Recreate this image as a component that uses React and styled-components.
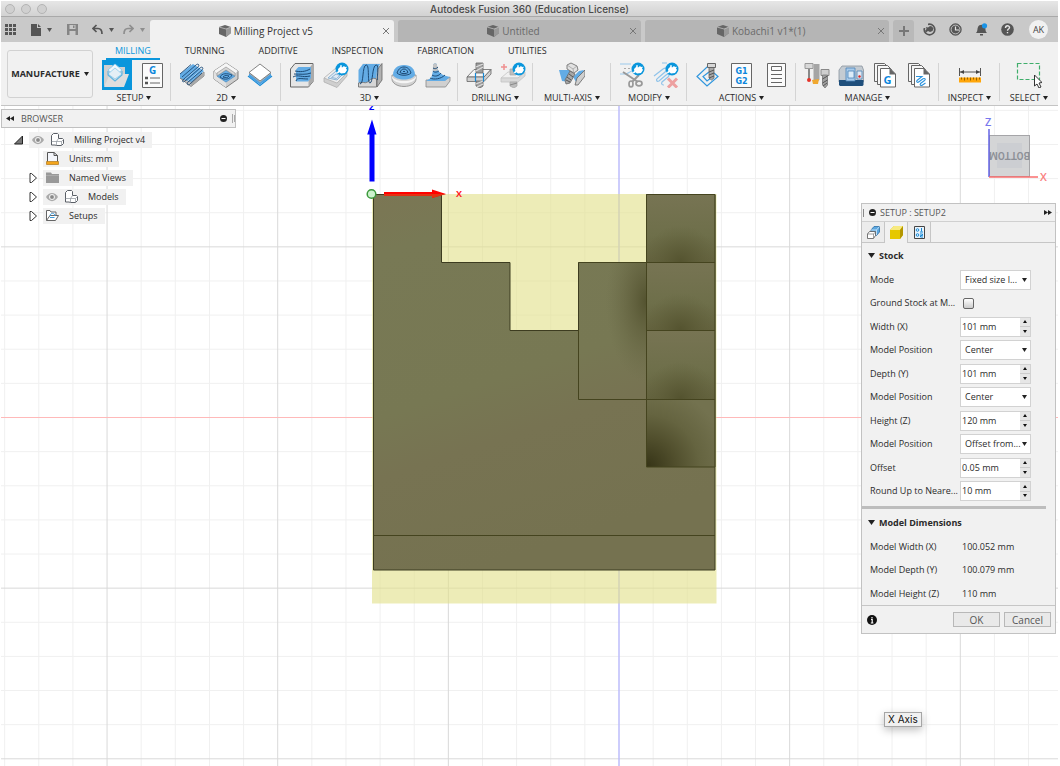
import { useState } from "react";
import styled, { createGlobalStyle, css } from "styled-components";

const GlobalStyle = createGlobalStyle`
  * { box-sizing: border-box; }
  html, body { margin: 0; background: #fff; }
  body, button, input, select {
    font-family: "Open Sans", "Noto Sans", sans-serif;
    font-size: 9px;
    line-height: 12px;
    color: #2b2b2b;
  }
  button { border: 0; padding: 0; margin: 0; background: none; }
  svg { display: block; flex: none; }
`;

const StylePage = styled.div`
  display: flex;
  flex-direction: column;
  min-height: 100vh;
  padding: 1px 2px 0 1px;
`;

/* ---------- window chrome ---------- */

const StyleTitleBar = styled.header`
  display: grid;
  grid-template-columns: 1fr auto 1fr;
  align-items: center;
  height: 16px;
  padding: 0 4px;
  background: linear-gradient(#e6e6e6, #d2d2d2);
  border-bottom: 1px solid #a9a9a9;
  h1 {
    margin: 0;
    font: 500 10px/14px Inter, Roboto, sans-serif;
    color: #4a4a4a;
  }
`;

const StyleLights = styled.div`
  display: flex;
  gap: 6px;
  i {
    width: 10px;
    height: 10px;
    border: 1px solid #b4b4b4;
    border-radius: 50%;
    background: #d0d0d0;
  }
`;

const StyleTopBar = styled.div`
  display: flex;
  height: 25px;
  background: #c9c9c9;
`;

const StyleQuickBar = styled.div`
  display: flex;
  align-items: center;
  width: 149px;
  padding-left: 4px;
  flex: none;
  button { display: flex; align-items: center; gap: 6px; }
`;

const StyleQuickButton = styled.button`
  margin-right: ${(p) => p.$after || 0}px;
  opacity: ${(p) => (p.$dim ? 0.5 : 1)};
`;

const StyleDocTabs = styled.div`
  display: flex;
  flex: 1;
  gap: 4px;
  min-width: 0;
`;

const StyleDocTab = styled.div`
  display: flex;
  flex: 1;
  align-items: center;
  min-width: 0;
  padding-right: 4px;
  margin-top: 3px;
  border-radius: 3px 3px 0 0;
  background: ${(p) => (p.$active ? "#f1f1f1" : "#b5b5b5")};
  color: ${(p) => (p.$active ? "#333" : "#6a6a6a")};
  .name {
    display: flex;
    flex: 1;
    align-items: center;
    justify-content: center;
    gap: 3px;
    color: inherit;
    font-size: 10px;
    white-space: nowrap;
  }
`;

const StyleAddTab = styled.button`
  display: grid;
  place-items: center;
  width: 21px;
  margin: 3px 0 0 4px;
  border-radius: 3px 3px 0 0;
  background: #b9b9b9;
`;

const StyleAccount = styled.div`
  display: flex;
  align-items: center;
  gap: 13px;
  padding: 0 10px 0 9px;
  flex: none;
`;

const StyleAvatar = styled.button`
  width: 19px;
  height: 19px;
  margin-left: 2px;
  border-radius: 50%;
  background: #f1f1f1;
  color: #444;
`;

/* ---------- ribbon ---------- */

const StyleRibbon = styled.nav`
  display: flex;
  height: 64px;
  background: #f1f1f1;
  border-bottom: 1px solid #c4c4c4;
`;

const StyleWorkspace = styled.button`
  display: flex;
  align-items: center;
  justify-content: center;
  gap: 4px;
  flex: none;
  width: 86px;
  height: 48px;
  margin: 8px 4px 0 6px;
  border: 1px solid #d2d2d2;
  border-radius: 3px;
  font-weight: 700;
`;

const StyleRibbonMain = styled.div`
  flex: 1;
  min-width: 0;
`;

const StyleRibbonTabs = styled.div`
  display: flex;
  gap: 16px;
  padding-left: 9px;
`;

const StyleRibbonTab = styled.button`
  height: 18px;
  padding: 2px 9px 0;
  border-bottom: 2px solid ${(p) => (p.$active ? "#0a96dc" : "transparent")};
  color: ${(p) => (p.$active ? "#0a96dc" : "#2b2b2b")};
`;

const StyleGroups = styled.div`
  display: flex;
  height: 45px;
`;

const StyleGroup = styled.section`
  display: flex;
  flex-direction: column;
  align-items: center;
  flex: ${(p) => p.$grow} 1 0;
  background: linear-gradient(#d4d4d4, #d4d4d4) right 3px / 1px 38px no-repeat;
  &:last-child { background: none; }
  .tools {
    display: flex;
    align-items: center;
    justify-content: center;
    height: 30px;
    gap: 8px;
  }
  .label {
    display: flex;
    align-items: center;
    gap: 3px;
    height: 15px;
    white-space: nowrap;
  }
`;

const StyleTool = styled.button`
  ${(p) =>
    p.$active &&
    css`
      padding: 2px;
      background: #0a96dc;
    `}
`;

/* ---------- viewport ---------- */

const StyleViewport = styled.main`
  position: relative;
  display: flex;
  justify-content: space-between;
  align-items: flex-start;
  flex: 1;
  overflow: hidden;
  background: #fff;
`;

const StyleScene = styled.svg`
  position: absolute;
  inset: 0;
  width: 100%;
  height: 100%;
`;

const StyleBrowser = styled.aside`
  position: relative;
  width: 235px;
  padding-top: 3px;
  header {
    display: flex;
    align-items: center;
    height: 19px;
    padding: 0 0 0 4px;
    background: #f1f1f1;
    border: 1px solid #c0c0c0;
    color: #555;
  }
  header span { flex: 1; padding-left: 7px; }
  ul { margin: 2px 0 0; padding: 0; list-style: none; }
`;

const StyleNode = styled.li`
  display: flex;
  align-items: center;
  gap: 5px;
  height: 19px;
  padding-left: ${(p) => (p.$root ? 12 : 26)}px;
  .chip {
    display: flex;
    align-items: center;
    gap: 7px;
    height: 16px;
    padding: 0 7px 0 3px;
    background: #f1f1f1;
  }
  .chip span { padding-left: 3px; white-space: nowrap; }
`;

const StyleRightSide = styled.div`
  position: relative;
  display: flex;
  flex-direction: column;
  align-items: flex-end;
  padding-right: 2px;
`;

const StyleCube = styled.svg`
  margin: 8px 6px 15px 0;
`;

const StylePalette = styled.form`
  width: 195px;
  background: #f1f1f1;
  border: 1px solid #c2c2c2;
`;

const StylePaletteHead = styled.header`
  display: flex;
  align-items: center;
  height: 18px;
  padding: 0 3px 0 1px;
  gap: 4px;
  color: #555;
  border-bottom: 1px solid #d0d0d0;
  span { flex: 1; }
`;

const StylePaletteTabs = styled.div`
  display: flex;
  height: 21px;
  border-bottom: 1px solid #c6c6c6;
`;

const StylePaletteTab = styled.button`
  display: grid;
  place-items: center;
  width: 23px;
  height: ${(p) => (p.$active ? 21 : 20)}px;
  border-right: 1px solid #c6c6c6;
  background: ${(p) => (p.$active ? "#f1f1f1" : "#ececec")};
`;

const StyleSectionTitle = styled.h2`
  display: flex;
  align-items: center;
  gap: 4px;
  height: 25px;
  margin: 0;
  padding-left: 6px;
  font-size: 9px;
  font-weight: 700;
`;

const StyleFields = styled.div`
  display: grid;
  grid-template-columns: 90px 71px;
  grid-auto-rows: 23px 24px;
  align-items: center;
  margin: 0;
  padding-left: 8px;
  label, dt, dd { margin: 0; white-space: nowrap; }
  dd { padding-left: 2px; }
`;

const StyleSelect = styled.div`
  position: relative;
  select {
    appearance: none;
    display: block;
    width: 71px;
    height: 20px;
    padding: 0 0 0 4px;
    border: 1px solid #d2d2d2;
    border-radius: 0;
    background: #fff;
  }
  svg { position: absolute; right: 4px; top: 8px; pointer-events: none; }
`;

const StyleSpinner = styled.div`
  display: flex;
  width: 71px;
  height: 20px;
  border: 1px solid #d2d2d2;
  input {
    flex: 1;
    min-width: 0;
    padding: 0 0 0 1px;
    border: 0;
    background: #fff;
  }
  div {
    display: flex;
    flex-direction: column;
    width: 10px;
    gap: 1px;
    background: #ccc;
  }
  button {
    display: grid;
    place-items: center;
    flex: 1;
    background: #e6e6e6;
  }
`;

const StyleCheck = styled.input`
  appearance: none;
  width: 11px;
  height: 11px;
  margin: 0 0 0 3px;
  border: 1px solid #666;
  border-radius: 2px;
  background: linear-gradient(#fff, #ccc);
`;

const StyleDivider = styled.hr`
  height: 3px;
  margin: 3px 9px 1px 0;
  border: 0;
  background: #bdbdbd;
`;

const StylePaletteFoot = styled.footer`
  display: flex;
  align-items: center;
  justify-content: flex-end;
  gap: 4px;
  height: 28px;
  padding: 0 4px 0 5px;
  border-top: 1px solid #c6c6c6;
  svg { margin-right: auto; }
  button {
    width: 47px;
    height: 15px;
    border: 1px solid #b8b8b8;
    background: #e9e9e9;
    font-size: 10px;
    color: #555;
  }
`;

const StyleHint = styled.div`
  position: absolute;
  left: 883px;
  top: 606px;
  padding: 0 3px;
  border: 1px solid #a6a6a6;
  background: #f0f0f0;
  box-shadow: 0 3px 8px rgba(0, 0, 0, 0.25);
  font: 10px/13px Inter, Roboto, sans-serif;
  color: #111;
`;

/* ---------- icons ---------- */

const Svg = ({ w = 26, h = w, children }) => (
  <svg width={w} height={h} viewBox={`0 0 ${w} ${h}`} fill="none" aria-hidden="true">
    {children}
  </svg>
);

const Caret = ({ color = "#222" }) => (
  <Svg w={5} h={4}>
    <path d="M0 0h5L2.500 4z" fill={color} />
  </Svg>
);

const BLUE = "#63ace5";
const LINE = "#666";
const DARK = "#1d4a75";

// round blue badge that marks preview commands
const Badge = () => (
  <g>
    <circle cx="19" cy="7" r="6.500" fill="#0a96dc" />
    <path d="M15 7l3-3 1 1.500L21 4l1.500 1.500L24 8l-2 3-4 .5-1.500-1.300-1.700 1.300-1-1.200L15.300 9z" fill="#fff" />
    <path d="M18 5V3M22 6l1.500-1" stroke="#fff" strokeWidth="1.200" />
  </g>
);

const Block = ({ children }) => (
  <g>
    <path d="M1.500 7L6 1.500h18v18L19.500 25h-18z" fill="#e6e6e6" stroke={LINE} />
    <path d="M19.500 7L24 1.500v18L19.500 25z" fill="#ababab" />
    {children}
  </g>
);

const Pages = ({ children }) => (
  <g>
    <path d="M2.500 1.500h10l4 4v14h-14z" fill="#f6f6f6" stroke={LINE} />
    <path d="M5.500 3.500h10l4 4v15h-14z" fill="#f6f6f6" stroke={LINE} />
    <path d="M8.500 6.500H18l5.500 5.500v13h-15z" fill="#fff" stroke={LINE} />
    <path d="M17.500 6v6.500H24z" fill={LINE} />
    {children}
  </g>
);

const icons = {
  setup: (
    <g>
      <path d="M0 24V3h8l2 2h11v8z" fill="#d0d0d0" />
      <path d="M11 2l7 6-7 6-7-6z" fill="#f2f8fc" stroke="#8fcdee" />
      <path d="M0 25l6-13h19l-5 13z" fill="#dedede" />
      <path d="M11 6l7 6-7 5-7-5z" fill="#e4eff6" stroke="#8fcdee" strokeWidth=".8" />
      <path d="M4 9v4l7 6 7-6V9" stroke="#5cb4e2" strokeWidth="1.100" />
    </g>
  ),
  gcode: (
    <g>
      <path d="M2.500 1.500h20v24h-20z" fill="#fbfbfb" stroke={LINE} />
      <text x="12.500" y="11.500" textAnchor="middle" fontSize="10" fontWeight="700" fill="#0a86dc">G</text>
      <path d="M5 16h3M5 21h3" stroke="#555" strokeWidth="2.500" />
      <path d="M10 16h10M10 21h10" stroke="#666" />
    </g>
  ),
  face: (
    <g>
      <path d="M1 16l11 8.500L25 14v-4L12 20z" fill="#c4c4c4" stroke={LINE} strokeWidth=".7" />
      <path d="M12 20L25 10v4L12 24.500z" fill="#a9a9a9" />
      <path d="M1 12L14 2l11 7-13 11L1 16z" fill={BLUE} />
      <path d="M6 17L20 5M9 19L23 7" stroke="#a5d1f3" />
      <path d="M3 15L17 3c2-2 4 0 2 2L5 17c-3 2-1 4 1 2L21 6c2-2 4 0 2 2L9 20c-2 2 0 4 2 2l12-11M1 12L12 2.500" stroke={DARK} strokeWidth=".9" />
    </g>
  ),
  pocket: (
    <g>
      <path d="M13 1l12 8v8l-12 8.500L1 17V9z" fill="#cdcdcd" stroke={LINE} strokeWidth=".8" />
      <path d="M13 1l12 8-12 9L1 9z" fill="#f6f6f6" />
      <path d="M1 9v8l12 8.500V21L5 15.500 3 12z" fill="#e2e2e2" />
      <path d="M13 8l9 6-9 6-9-6z" fill={BLUE} stroke="#4f92c9" strokeWidth=".8" />
      <path d="M13 8l9 6v-3l-9-6-9 6v3z" fill="#d6d6d6" stroke="#8a8a8a" strokeWidth=".6" />
      <path d="M7 15c2-4 7-4 12-2-2 4-7 6-12 2zM10 15c2-2 4-2 6-1-1 2-4 2-6 1z" stroke={DARK} strokeWidth=".9" />
    </g>
  ),
  contour: (
    <g>
      <path d="M1 14l12 9.500L25 14" stroke="#1689d6" strokeWidth="1.200" />
      <path d="M2 11l11 8.500L24 11v4l-11 7.500L2 15z" fill="#4ba0e0" />
      <path d="M2 10l11 9 11-9v1.500L13 20.500 2 11.500z" fill="#b4b4b4" />
      <path d="M13 2l11 8.500-11 8.500L2 10.500z" fill="#fff" stroke={LINE} strokeWidth=".8" />
    </g>
  ),
  adaptive: (
    <Block>
      <path d="M7 7.500L9.500 5H22v11l-3 3.500H7z" fill={BLUE} />
      <path d="M6 9c5 1 10 1 15-2M5 12c6 0 12 1 17-1M4 15c5-3 9 1 17-1M7 19c1-4 6-2 12-2" stroke={DARK} />
    </Block>
  ),
  pocket3d: (
    <g>
      <path d="M1 16v4l13 5.500L24 14v-4" fill="#cfcfcf" stroke="#b0b0b0" strokeWidth=".8" />
      <path d="M1 16L13 6l11 5-10 10z" fill="#ededed" stroke="#b0b0b0" strokeWidth=".8" />
      <path d="M5 16l8-7 7 3-6 6zM8.500 15.500L13 12l4 1.500-3.500 3z" fill="#dfeaf4" stroke="#8fb4d3" />
      <Badge />
    </g>
  ),
  parallel: (
    <g>
      <path d="M1.500 8l4.500-6.500h19l-4.500 6.500z" fill="#dcdcdc" />
      <path d="M20 8l5-6.500V18l-5 7z" fill="#b2b2b2" stroke={LINE} strokeWidth=".8" />
      <path d="M1.500 8L6 2h17l-3 6-1 9c-4-2-6 1-8 3-3 2-6-1-9.500 1z" fill={BLUE} />
      <path d="M1.500 21c4-2 6 1 9-1s4-5 9-3v8h-18z" fill="#d6d6d6" stroke={LINE} strokeWidth=".8" />
      <path d="M3 22C7 22 5 4 9 3s1 18 4 18 2-17 6-18 0 15 2 15" stroke={DARK} />
    </g>
  ),
  scallop: (
    <g>
      <path d="M1 13v4c0 4 5 7.500 12 7.500S25 21 25 17v-4z" fill="#d2d2d2" stroke="#888" strokeWidth=".8" />
      <path d="M1 13c0 8 24 8 24 0v3c-3 7-21 7-24 0z" fill="#f4f4f4" />
      <path d="M2 13C2 7 6 3 13 3s11 4 11 10c-3 6-19 6-22 0z" fill={BLUE} />
      <path d="M6 11c1-3 3-6 7-6s6 3 7 6c-3 3-11 3-14 0zM9 10.500C10 8 11 7 13 7s3 1 4 3.500c-2 1.500-6 1.500-8 0zM12 9.500h2" stroke={DARK} />
    </g>
  ),
  ramp: (
    <g>
      <path d="M1 18h19l5-3v4l-4.500 6H1z" fill="#d0d0d0" stroke="#888" strokeWidth=".8" />
      <path d="M8 3c1-2.500 4-2.500 4 .5 0 7 5 10 13 11.500L20 19H1l5-3c2-4 2-9 2-13z" fill={BLUE} />
      <path d="M8 3c1-2.500 4-2.500 4 .5l1 5-5 1z" fill="#c4c4c4" />
      <path d="M8 6c2 1 3 1 5-1M8 9c2 2 4 1 6 0M7 13c3 2 7 1 9-2M5 16c4 2 11 1 15-3" stroke={DARK} />
    </g>
  ),
  drill: (
    <g>
      <path d="M1 15l7-7.500h17L18 15z" fill="#f6f6f6" stroke={LINE} strokeWidth=".8" />
      <path d="M1 15h17l7-7.500V12l-7 7.500H1z" fill="#cfcfcf" stroke={LINE} strokeWidth=".8" />
      <path d="M10 1h7v10h-7zM10 19h7v5l-3 2-4-2z" fill="#9c9c9c" stroke={LINE} strokeWidth=".8" />
      <path d="M10 5l7-3M10 9l7-4M10 22l7-3M11 25l6-3" stroke="#dedede" strokeWidth="1.200" />
      <path d="M9.500 11v8.500M17.500 11v8.500" stroke="#1689d6" strokeWidth="1.200" />
    </g>
  ),
  drillAdd: (
    <g>
      <path d="M4 2v6M1 5h6" stroke="#ee8f8f" strokeWidth="1.500" />
      <path d="M1 16l7-6h17l-7 6z" fill="#f0f0f0" stroke="#c4c4c4" strokeWidth=".8" />
      <path d="M1 16h17l7-6v4l-7 6H1z" fill="#dadada" stroke="#c4c4c4" strokeWidth=".8" />
      <path d="M10 7h6v6h-6zM10 20h7v4l-3 2-4-2z" fill="#bdbdbd" stroke="#aaa" strokeWidth=".8" />
      <path d="M10 23l7-2" stroke="#888" />
      <Badge />
    </g>
  ),
  multi: (
    <g>
      <path d="M0 8h10l4 4-4 8-7-1z" fill={BLUE} />
      <path d="M14 15l6-6 5-1-6 15z" fill={BLUE} />
      <path d="M18 16l8-8v6l-7 9h-3z" fill="#cfcfcf" stroke={LINE} strokeWidth=".8" />
      <path d="M11 9l5 3-5 9-4 1-1-4z" fill="#a8a8a8" stroke={LINE} strokeWidth=".8" />
      <path d="M10 12l4 3M8 15l4 3M7 18l4 2" stroke="#555" />
      <path d="M8 3l4-2 6 3 1 4-4 3-7-4z" fill="#e2e2e2" stroke={LINE} strokeWidth=".8" />
      <path d="M8 3l6 4 4-3M14 7l1 4" stroke="#999" strokeWidth=".7" />
    </g>
  ),
  trim: (
    <g>
      <path d="M1 2h11M1 12h5c4 0 4-3 8-3" stroke="#9ccaec" strokeWidth="1.200" />
      <path d="M5 6.500h6" stroke="#aaa" strokeDasharray="2 2" />
      <path d="M4 10l15 10M20 13l-7 7" stroke="#999" strokeWidth="2" />
      <ellipse cx="12" cy="22" rx="2" ry="3" stroke="#999" strokeWidth="1.700" />
      <ellipse cx="20" cy="21.500" rx="3" ry="2.300" stroke="#999" strokeWidth="1.700" />
      <Badge />
    </g>
  ),
  untrim: (
    <g>
      <path d="M9 1h5M1 14l9-7c3-2 5 0 2 3l-7 6c-3 2-1 4 1 3l7-6c3-2 4 0 2 2l-6 5c-1 2 0 3 2 3" stroke="#8fc3ea" strokeWidth="1.200" />
      <path d="M15 16.500l9 9M24 16.500l-9 9" stroke="#eda0a0" strokeWidth="3" />
      <Badge />
    </g>
  ),
  simulate: (
    <g>
      <path d="M14 5h-2L2 14.500 12 24l11-9.500L19 11M14 10l-6 4.500 4 4.500 6-4.500" stroke="#2f96de" strokeWidth="1.200" />
      <path d="M14 5h5v11l-2.500 2L14 16z" fill="#a8a8a8" stroke={LINE} strokeWidth=".8" />
      <path d="M14 10l5-2M14 13l5-2M14 16l5-2" stroke="#555" />
      <path d="M12.500 1.500h8v4h-8z" fill="#d8d8d8" stroke={LINE} />
    </g>
  ),
  g1g2: (
    <g fontFamily="DejaVu Sans, sans-serif" fontSize="8" fontWeight="700" fill="#0a86dc" textAnchor="middle">
      <path d="M2.500 1.500h20v24h-20z" fill="#fbfbfb" stroke={LINE} />
      <text x="12.500" y="12">G1</text>
      <text x="12.500" y="22">G2</text>
    </g>
  ),
  sheet: (
    <g>
      <path d="M4.500 1.500h18v23h-18z" fill="#fbfbfb" stroke={LINE} />
      <path d="M8.500 4.500h10v4h-10z" stroke={LINE} />
      <path d="M8 12.500h11M8 16.500h11M8 20.500h11" stroke={LINE} />
    </g>
  ),
  library: (
    <g>
      <path d="M1 1.500h8v5H1z" fill="#d8d8d8" stroke="#999" />
      <path d="M5 7v10" stroke="#666" strokeWidth="1.500" />
      <circle cx="5" cy="18" r="2" fill="#e5332a" />
      <path d="M9.500 2h6v16l-3 2h-3z" fill="#a5a5a5" />
      <path d="M8 18l7-1-1 5H9z" fill="#f0a830" />
      <path d="M17 7.500h8v6h-8z" fill="#cfcfcf" stroke="#888" />
      <path d="M18.500 13h5v10l-2.500 3-2.500-3z" fill="#a2a2a2" stroke="#777" strokeWidth=".8" />
      <path d="M18.500 17l5-3M18.500 21l5-3M19 24l4-3" stroke="#555" />
    </g>
  ),
  machine: (
    <g>
      <path d="M1 20V8l3-4h20l1.500 4v12z" fill="#c4cbd2" stroke="#8a949e" strokeWidth=".8" />
      <path d="M1 18h24.500v5l-1 1H2l-1-1z" fill="#1f4f7c" />
      <path d="M8 6h9v13H8z" fill="#a8cbec" stroke="#4c83b6" strokeWidth=".8" />
      <path d="M10 9h6v7h-6z" fill="#dcebf8" stroke="#4c83b6" strokeWidth=".8" />
      <path d="M19 9h5v8h-5z" fill="#dfe8f2" stroke="#4c83b6" strokeWidth=".8" />
      <circle cx="21.500" cy="14.500" r="1.200" fill="#d22" />
    </g>
  ),
  post: (
    <Pages>
      <text x="15.500" y="22" textAnchor="middle" fontSize="11" fontWeight="700" fill="#0a86dc">G</text>
    </Pages>
  ),
  template: (
    <Pages>
      <path d="M10 14.500h6l-5 4c-1 1.500.5 2.500 2 1.300l4-3c2-1 3 .5 1.500 1.700l-4 3c-1 1.500.5 2.500 2 1.500l3-2" stroke="#2a92dd" strokeWidth="1.100" />
    </Pages>
  ),
  measure: (
    <g>
      <path d="M2.500 6v8M23.500 6v8M3 10h20" stroke="#555" />
      <path d="M3 10l4-2v4zM23 10l-4-2v4z" fill="#444" />
      <path d="M2 15.500h22v5H2z" fill="#ffa60a" />
      <path d="M4.500 15.500v2M7.500 15.500v3M10.500 15.500v2M13.500 15.500v3M16.500 15.500v2M19.500 15.500v3M22.500 15.500v2" stroke="#8a5a00" strokeWidth=".9" />
    </g>
  ),
  select: (
    <g>
      <path d="M1.500 1.500h22v16h-22z" stroke="#3fae6b" strokeWidth="1.200" strokeDasharray="4 2" />
      <path d="M18.500 13v11l2.500-2 2 4 2-1-2-4 3-.5z" fill="#fff" stroke="#333" />
    </g>
  ),
};

const Cube = () => (
  <Svg w={12}>
    <path d="M0 2l6-2 6 2v6l-5 4-7-3z" fill="#666" />
    <path d="M7 4l5-2v6l-5 4z" fill="#999" />
    <path d="M0 2l7 2 5-2" stroke="#ccc" strokeWidth=".7" />
  </Svg>
);

const Eye = () => (
  <Svg w={12} h={10}>
    <path d="M0 5c3-5.500 9-5.500 12 0-3 5.500-9 5.500-12 0z" fill="#aaa" />
    <circle cx="6" cy="5" r="2.600" stroke="#eee" />
    <circle cx="6" cy="5" r="1.500" fill="#888" />
  </Svg>
);

const nodeIcons = {
  component: (
    <Svg w={13}>
      <path d="M.5 2.500l2-2h4l1 1v4h4l1 1v4l-2 2H5.500l-1.500-.5H.5z" fill="#fff" stroke="#5a5f66" />
      <path d="M5.500 12.500v-4l2-3M5.500 8.500h-5M5.500 8.500h5l2-2M10.500 8.500v4" stroke="#8a9098" strokeWidth=".7" />
    </Svg>
  ),
  units: (
    <Svg w={13}>
      <path d="M1.500 9.500v-9H8l3.500 3v6" fill="#f4f6fb" stroke="#555" />
      <path d="M8 .5v3h3.500" stroke="#555" />
      <path d="M.5 9.500h12v3H.5z" fill="#f3a51c" stroke="#a86c08" strokeWidth=".6" />
    </Svg>
  ),
  folder: (
    <Svg w={13}>
      <path d="M0 1.500h5L6 3h7v9H0z" fill="#999" />
      <path d="M0 4.500h13" stroke="#b5b5b5" strokeWidth=".7" />
    </Svg>
  ),
  setups: (
    <Svg w={13}>
      <path d="M.5 11.500v-10H4l1 1.500h5V6" fill="#fff" stroke="#666" />
      <path d="M.5 11.500L4 6.500h8.500l-3 5z" fill="#fff" stroke="#666" />
      <path d="M4 7c0-3.500 5-3.500 5 0M4 8.500h4.500" stroke="#3d9bdc" />
    </Svg>
  ),
};

/* ---------- data ---------- */

const docTabs = ["Milling Project v5", "Untitled", "Kobachi1 v1*(1)"];

const ribbonTabs = ["MILLING", "TURNING", "ADDITIVE", "INSPECTION", "FABRICATION", "UTILITIES"];

const groups = [
  { label: "SETUP", grow: 74, tools: ["setup", "gcode"] },
  { label: "2D", grow: 110, tools: ["face", "pocket", "contour"] },
  { label: "3D", grow: 177, tools: ["adaptive", "pocket3d", "parallel", "scallop", "ramp"] },
  { label: "DRILLING", grow: 75, tools: ["drill", "drillAdd"] },
  { label: "MULTI-AXIS", grow: 78, tools: ["multi"] },
  { label: "MODIFY", grow: 76, tools: ["trim", "untrim"] },
  { label: "ACTIONS", grow: 109, tools: ["simulate", "g1g2", "sheet"] },
  { label: "MANAGE", grow: 143, tools: ["library", "machine", "post", "template"] },
  { label: "INSPECT", grow: 61, tools: ["measure"] },
  { label: "SELECT", grow: 58, tools: ["select"] },
];

const nodes = [
  { label: "Milling Project v4", icon: "component", eye: true, root: true },
  { label: "Units: mm", icon: "units" },
  { label: "Named Views", icon: "folder", arrow: true },
  { label: "Models", icon: "component", eye: true, arrow: true },
  { label: "Setups", icon: "setups", arrow: true },
];

const fields = [
  { id: "mode", label: "Mode", type: "select", value: "Fixed size l..." },
  { id: "ground", label: "Ground Stock at M...", type: "check" },
  { id: "width", label: "Width (X)", type: "spin", value: "101 mm" },
  { id: "width-pos", label: "Model Position", type: "select", value: "Center" },
  { id: "depth", label: "Depth (Y)", type: "spin", value: "101 mm" },
  { id: "depth-pos", label: "Model Position", type: "select", value: "Center" },
  { id: "height", label: "Height (Z)", type: "spin", value: "120 mm" },
  { id: "height-pos", label: "Model Position", type: "select", value: "Offset from..." },
  { id: "offset", label: "Offset", type: "spin", value: "0.05 mm" },
  { id: "round", label: "Round Up to Neare...", type: "spin", value: "10 mm" },
];

const dimensions = [
  ["Model Width (X)", "100.052 mm"],
  ["Model Depth (Y)", "100.079 mm"],
  ["Model Height (Z)", "110 mm"],
];

/* ---------- parts ---------- */

const QuickBar = () => (
  <StyleQuickBar>
    <StyleQuickButton aria-label="Data panel" $after={15}>
      <Svg w={11}>
        <path d="M0 0h3v3H0zM4 0h3v3H4zM8 0h3v3H8zM0 4h3v3H0zM4 4h3v3H4zM8 4h3v3H8zM0 8h3v3H0zM4 8h3v3H4zM8 8h3v3H8z" fill="#555" />
      </Svg>
    </StyleQuickButton>
    <StyleQuickButton aria-label="File" $after={15}>
      <Svg w={10} h={12}>
        <path d="M0 0h6v4h4v8H0z" fill="#555" />
        <path d="M7 0l3 3H7z" fill="#555" />
      </Svg>
      <Caret color="#555" />
    </StyleQuickButton>
    <StyleQuickButton aria-label="Save" $after={14}>
      <Svg w={11}>
        <path d="M0 0h11v11H0z" fill="#858585" />
        <path d="M2.500 1h6v4h-6zM2.500 7h6v4h-6z" fill="#c9c9c9" />
        <path d="M6 1.500h1.500v2.500H6z" fill="#858585" />
      </Svg>
    </StyleQuickButton>
    <StyleQuickButton aria-label="Undo" $after={9}>
      <Svg w={11}>
        <path d="M4.500 1L1 4.500 4.500 8M1.500 4.500H6c3 0 4 2 4 5.500" stroke="#555" strokeWidth="1.700" />
      </Svg>
      <Caret color="#555" />
    </StyleQuickButton>
    <StyleQuickButton aria-label="Redo" $dim>
      <Svg w={11}>
        <path d="M6.500 1L10 4.500 6.500 8M9.500 4.500H5c-3 0-4 2-4 5.500" stroke="#555" strokeWidth="1.700" />
      </Svg>
      <Caret color="#555" />
    </StyleQuickButton>
  </StyleQuickBar>
);

const DocTabs = () => (
  <StyleDocTabs>
    {docTabs.map((name, i) => (
      <StyleDocTab key={name} $active={i === 0}>
        <button className="name">
          <Cube />
          {name}
        </button>
        <button aria-label="Close">
          <Svg w={8}>
            <path d="M1 1l6 6M7 1L1 7" stroke="#777" />
          </Svg>
        </button>
      </StyleDocTab>
    ))}
  </StyleDocTabs>
);

const Account = () => (
  <StyleAccount>
    <button aria-label="Extensions">
      <Svg w={13}>
        <circle cx="6.500" cy="6.500" r="5.300" stroke="#555" strokeWidth="1.700" />
        <path d="M0 0h5v2.500L2.500 5H0z" fill="#c9c9c9" />
        <path d="M3 4l2 .5L7 3l2 .5 1.500 2L9.500 8 7 9 5 8 3 9.500 2 8l1.500-2z" fill="#555" />
      </Svg>
    </button>
    <button aria-label="Job status">
      <Svg w={13}>
        <circle cx="6.500" cy="6.500" r="5.700" fill="#555" stroke="#555" />
        <circle cx="6.500" cy="6.500" r="4.400" stroke="#c9c9c9" strokeWidth=".9" />
        <path d="M6.500 3.500V7H10" stroke="#e5e5e5" strokeWidth="1.200" />
      </Svg>
    </button>
    <button aria-label="Notifications">
      <Svg w={13}>
        <path d="M1 10c2-2 1-4 2-6 1-3 6-3 7 0s0 4 2 6zM5 11h3v1.500H5z" fill="#555" />
        <circle cx="9.500" cy="2.800" r="2.600" fill="#1a93e6" />
      </Svg>
    </button>
    <button aria-label="Help">
      <Svg w={13}>
        <circle cx="6.500" cy="6.500" r="6.300" fill="#555" />
        <path d="M4.500 5c0-3 4-2.700 4-.5 0 1.500-2 1.500-2 3.200M6.500 9v1.300" stroke="#e5e5e5" strokeWidth="1.400" />
      </Svg>
    </button>
    <StyleAvatar>AK</StyleAvatar>
  </StyleAccount>
);

const Ribbon = () => {
  const [tab, setTab] = useState("MILLING");
  return (
    <StyleRibbon>
      <StyleWorkspace>
        MANUFACTURE
        <Caret />
      </StyleWorkspace>
      <StyleRibbonMain>
        <StyleRibbonTabs>
          {ribbonTabs.map((name) => (
            <StyleRibbonTab key={name} $active={name === tab} onClick={() => setTab(name)}>
              {name}
            </StyleRibbonTab>
          ))}
        </StyleRibbonTabs>
        <StyleGroups>
          {groups.map(({ label, grow, tools }) => (
            <StyleGroup key={label} $grow={grow}>
              <div className="tools">
                {tools.map((tool) => (
                  <StyleTool key={tool} aria-label={tool} $active={tool === "setup"}>
                    <Svg>{icons[tool]}</Svg>
                  </StyleTool>
                ))}
              </div>
              <button className="label">
                {label}
                <Caret />
              </button>
            </StyleGroup>
          ))}
        </StyleGroups>
      </StyleRibbonMain>
    </StyleRibbon>
  );
};

const STEP = 34.13;
const gridLines = Array.from({ length: 80 }, (_, i) => i - 20);
const minorLines = gridLines.filter((n) => n % 5 !== 0);
const majorLines = gridLines.filter((n) => n % 5 === 0 && n !== 0);

const GridLines = ({ lines, color }) => (
  <g stroke={color}>
    {lines.map((n) => (
      <path key={n} d={`M${619 + n * STEP} 0v3000M0 ${417.5 + n * STEP}h4000`} />
    ))}
  </g>
);

// drawn in window coordinates, shifted to the viewport's corner
const Scene = () => (
  <StyleScene aria-hidden="true">
    <defs>
      <linearGradient id="body" x1="0" y1="0" x2=".3" y2="1">
        <stop offset="0" stopColor="#7b7654" />
        <stop offset=".15" stopColor="#787955" />
        <stop offset=".55" stopColor="#777853" />
        <stop offset=".7" stopColor="#777352" />
        <stop offset="1" stopColor="#757250" />
      </linearGradient>
      <linearGradient id="face" x1="0" y1="0" x2="0" y2="1">
        <stop offset="0" stopColor="#777453" />
        <stop offset=".6" stopColor="#6e6f4a" />
        <stop offset="1" stopColor="#64633f" />
      </linearGradient>
      <radialGradient id="side" cx="1" cy=".28" r=".6">
        <stop offset="0" stopColor="#53522f" />
        <stop offset=".5" stopColor="#62613e" stopOpacity=".6" />
        <stop offset="1" stopColor="#6b6b48" stopOpacity="0" />
      </radialGradient>
      <radialGradient id="low" cx=".5" cy="1" r=".55">
        <stop offset="0" stopColor="#54532f" />
        <stop offset="1" stopColor="#5f5e39" stopOpacity="0" />
      </radialGradient>
      <radialGradient id="corner" cx="0" cy="1" r="1.200">
        <stop offset="0" stopColor="#353316" />
        <stop offset=".35" stopColor="#504e2c" />
        <stop offset=".65" stopColor="#656440" />
        <stop offset="1" stopColor="#73724f" />
      </radialGradient>
    </defs>
    <g transform="translate(-1 -106)">
      <GridLines lines={minorLines} color="#f0f0f0" />
      <GridLines lines={majorLines} color="#d9d9d9" />
      <path d="M0 417.500h4000" stroke="#ffb9b9" shapeRendering="crispEdges" />
      <path d="M619 0v3000" stroke="#bcbcfb" strokeWidth="1.500" />
      <rect x="372" y="194" width="344.500" height="409.500" fill="#e2e08a" fillOpacity=".62" />
      <path
        d="M373.500 194.500h68v68h68.500v68h68.500v-68h68v-68H715V570H373.500z"
        fill="url(#body)"
        stroke="#3d3c20"
      />
      <path d="M578.500 262.500h68v137h-68z" fill="url(#side)" />
      {[194.5, 262.5, 331].map((y) => (
        <g key={y}>
          <rect x="646.500" y={y} width="68" height="68" fill="url(#face)" />
          <rect x="646.500" y={y} width="68" height="68" fill="url(#low)" />
        </g>
      ))}
      <rect x="646.500" y="399.500" width="68" height="67.500" fill="url(#corner)" />
      <path
        d="M578.500 330v69.500H715M646.500 194.500v272.500H715V194.500h-68.500M578.500 262.500H715M646.500 330.500H715M373.500 535.500H715"
        stroke="#45441f"
        fill="none"
      />
      <text x="371.500" y="110" textAnchor="middle" fontSize="9" fontWeight="700" fill="#00f">Z</text>
      <path d="M369.500 181.500v-47h-2.300L372 119.500l4.500 15h-2v47z" fill="#00f" />
      <path d="M384 192h48v-2.500l14 4.500-14 4v-2.300h-48z" fill="#f00" />
      <path d="M384 194h62l-14 4v-2.300h-48z" fill="#e23412" />
      <text x="459" y="197" textAnchor="middle" fontSize="9" fontWeight="700" fill="#f22">X</text>
      <circle cx="371.500" cy="194" r="4.300" fill="#cdf2cd" stroke="#3c9a3c" strokeWidth="1.500" />
    </g>
  </StyleScene>
);

const Minus = () => (
  <Svg w={7}>
    <circle cx="3.500" cy="3.500" r="3.500" fill="#222" />
    <path d="M1.500 3.500h4" stroke="#fff" />
  </Svg>
);

const Browser = () => (
  <StyleBrowser>
    <header>
      <Svg w={8} h={5}>
        <path d="M4 0v5L0 2.500zM8 0v5L4 2.500z" fill="#222" />
      </Svg>
      <span>BROWSER</span>
      <Minus />
      <Svg w={8} h={9}>
        <path d="M5.500 0v9M7.500 1v7" stroke="#aaa" />
      </Svg>
    </header>
    <ul>
      {nodes.map(({ label, icon, eye, root, arrow }) => (
        <StyleNode key={label} $root={root}>
          <Svg w={11} h={12}>
            {root && <path d="M9.500 2v8h-8z" fill="#777" stroke="#222" />}
            {arrow && <path d="M3 1.500h1.500l5 4.500-5 4.500H3z" fill="#fff" stroke="#333" />}
          </Svg>
          <div className="chip">
            {eye && <Eye />}
            {nodeIcons[icon]}
            <span>{label}</span>
          </div>
        </StyleNode>
      ))}
    </ul>
  </StyleBrowser>
);

const Field = ({ id, label, type, value }) => (
  <>
    <label htmlFor={id}>{label}</label>
    {type === "check" && <StyleCheck id={id} type="checkbox" />}
    {type === "select" && (
      <StyleSelect>
        <select id={id}>
          <option>{value}</option>
        </select>
        <Caret />
      </StyleSelect>
    )}
    {type === "spin" && (
      <StyleSpinner>
        <input id={id} defaultValue={value} />
        <div>
          <button type="button" aria-label="Increase"><Svg w={4} h={3}><path d="M0 3h4L2 0z" fill="#111" /></Svg></button>
          <button type="button" aria-label="Decrease"><Svg w={4} h={3}><path d="M0 0h4L2 3z" fill="#111" /></Svg></button>
        </div>
      </StyleSpinner>
    )}
  </>
);

const SectionTitle = ({ children }) => (
  <StyleSectionTitle>
    <Svg w={7} h={5}>
      <path d="M0 0h7L3.500 5z" fill="#222" />
    </Svg>
    {children}
  </StyleSectionTitle>
);

const Dimension = ({ name, value }) => (
  <>
    <dt>{name}</dt>
    <dd>{value}</dd>
  </>
);

const Palette = () => (
  <StylePalette>
    <StylePaletteHead>
      <Svg w={2} h={8}>
        <path d="M.5 0v8" stroke="#888" />
      </Svg>
      <Minus />
      <span>SETUP : SETUP2</span>
      <Svg w={8} h={5}>
        <path d="M0 0v5l4-2.500zM4 0v5l4-2.500z" fill="#222" />
      </Svg>
    </StylePaletteHead>
    <StylePaletteTabs>
      <StylePaletteTab type="button" aria-label="Setup">
        <Svg w={13}>
          <path d="M4 4l3-3.500h5.500V6l-3 3.500H4z" fill="#5ba7e0" stroke="#2d6ea5" strokeWidth=".8" />
          <path d="M4 4h5.500v5M9.500 4l3-3.500" stroke="#d7ebfa" strokeWidth=".8" />
          <path d="M.5 8l2-2.500h6v4l-2 3h-6z" fill="#fff" stroke="#555" strokeWidth=".8" />
          <path d="M.5 8h6v4M6.500 8l2-2" stroke="#777" strokeWidth=".7" />
        </Svg>
      </StylePaletteTab>
      <StylePaletteTab type="button" aria-label="Stock" $active>
        <Svg w={13}>
          <path d="M0 4l4-4h9v9l-3 4H0z" fill="#e6c800" />
          <path d="M0 4l4-4h9l-3 4z" fill="#f7ea80" />
          <path d="M10 4l3-4v9l-3 4z" fill="#b39600" />
        </Svg>
      </StylePaletteTab>
      <StylePaletteTab type="button" aria-label="Post process">
        <Svg w={11} h={13}>
          <path d="M.5.5h10v12H.5z" fill="#e8f3fc" stroke="#444" />
          <circle cx="3.500" cy="4" r="1.300" stroke="#1689d6" />
          <circle cx="3.500" cy="9" r="1.300" stroke="#1689d6" />
          <path d="M7.500 2v3.500M6 6h3M6 8h2.500v1.500H6.500V11H9" stroke="#1689d6" />
        </Svg>
      </StylePaletteTab>
    </StylePaletteTabs>
    <SectionTitle>Stock</SectionTitle>
    <StyleFields>
      {fields.map((field) => (
        <Field key={field.id} {...field} />
      ))}
    </StyleFields>
    <StyleDivider />
    <SectionTitle>Model Dimensions</SectionTitle>
    <StyleFields as="dl">
      {dimensions.map(([name, value]) => (
        <Dimension key={name} name={name} value={value} />
      ))}
    </StyleFields>
    <StylePaletteFoot>
      <Svg w={10}>
        <circle cx="5" cy="5" r="5" fill="#111" />
        <path d="M5 2v1.500M4 4.500h1.200V8M3.800 8h2.600" stroke="#fff" strokeWidth="1.200" />
      </Svg>
      <button type="button">OK</button>
      <button type="button">Cancel</button>
    </StylePaletteFoot>
  </StylePalette>
);

const ViewCube = () => (
  <StyleCube width="66" height="74" aria-hidden="true">
    <rect x="5.500" y="21.500" width="40" height="41" fill="#d4d5d6" stroke="#a5a5a8" />
    <rect x="13" y="29" width="25" height="25" fill="#ccced2" />
    <text
      x="25.500"
      y="41"
      textAnchor="middle"
      dominantBaseline="central"
      transform="rotate(180 25.500 41)"
      fontFamily="Roboto, sans-serif"
      fontSize="10"
      fontWeight="600"
      fill="#8c9097"
    >
      BOTTOM
    </text>
    <path d="M5 15v48" stroke="#6464e6" strokeWidth="1.500" />
    <path d="M5 63h49" stroke="#fa6e6e" strokeWidth="1.500" />
    <text x="1" y="12" fontSize="11" fontWeight="600" fill="#7878ee">Z</text>
    <text x="56" y="67" fontSize="11" fontWeight="600" fill="#fa8080">X</text>
  </StyleCube>
);

const App = () => (
  <>
    <GlobalStyle />
    <StylePage>
      <StyleTitleBar>
        <StyleLights>
          <i />
          <i />
          <i />
        </StyleLights>
        <h1>Autodesk Fusion 360 (Education License)</h1>
      </StyleTitleBar>
      <StyleTopBar>
        <QuickBar />
        <DocTabs />
        <StyleAddTab aria-label="New design">
          <Svg w={10}>
            <path d="M5 0v10M0 5h10" stroke="#777" strokeWidth="2" />
          </Svg>
        </StyleAddTab>
        <Account />
      </StyleTopBar>
      <Ribbon />
      <StyleViewport>
        <Scene />
        <Browser />
        <StyleRightSide>
          <ViewCube />
          <Palette />
        </StyleRightSide>
        <StyleHint role="tooltip">X Axis</StyleHint>
      </StyleViewport>
    </StylePage>
  </>
);

export default App;
